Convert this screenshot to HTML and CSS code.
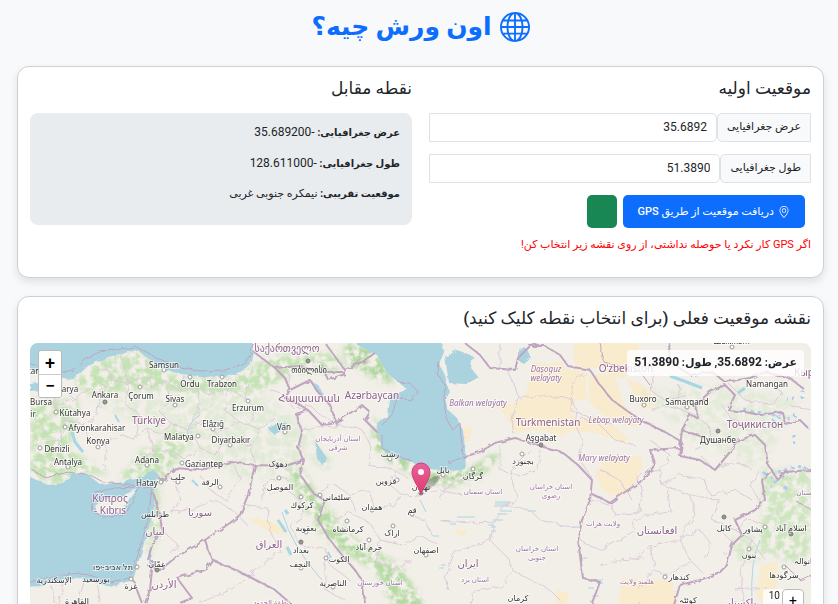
FILE: index.html
```html
<!DOCTYPE html>
<html lang="fa" dir="rtl">
<head>
<meta charset="utf-8">
<meta name="viewport" content="width=device-width, initial-scale=1">
<title>اون ورش چیه؟</title>
<link rel="stylesheet" href="styles.css">
</head>
<body>
<main class="page">
  <h1 class="title">
    <svg class="title-icon" viewBox="0 0 16 16" fill="currentColor" aria-hidden="true"><path d="M0 8a8 8 0 1 1 16 0A8 8 0 0 1 0 8m7.5-6.923c-.67.204-1.335.82-1.887 1.855A8 8 0 0 0 5.145 4H7.5zM4.09 4a9.3 9.3 0 0 1 .64-1.539 7 7 0 0 1 .597-.933A7.03 7.03 0 0 0 2.255 4zm-.582 3.5c.03-.877.138-1.718.312-2.5H1.674a7 7 0 0 0-.656 2.5zM4.847 5a12.5 12.5 0 0 0-.338 2.5H7.5V5zM8.5 5v2.5h2.99a12.5 12.5 0 0 0-.337-2.5zM4.51 8.5a12.5 12.5 0 0 0 .337 2.5H7.5V8.5zm3.99 0V11h2.653c.187-.765.306-1.608.338-2.5zM5.145 12q.208.58.468 1.068c.552 1.035 1.218 1.65 1.887 1.855V12zm.182 2.472a7 7 0 0 1-.597-.933A9.3 9.3 0 0 1 4.09 12H2.255a7 7 0 0 0 3.072 2.472M3.82 11a13.7 13.7 0 0 1-.312-2.5h-2.49c.062.89.291 1.733.656 2.5zm6.853 3.472A7 7 0 0 0 13.745 12H11.91a9.3 9.3 0 0 1-.64 1.539 7 7 0 0 1-.597.933M8.5 12v2.923c.67-.204 1.335-.82 1.887-1.855q.26-.487.468-1.068zm3.68-1h2.146c.365-.767.594-1.61.656-2.5h-2.49a13.7 13.7 0 0 1-.312 2.5m2.802-3.5a7 7 0 0 0-.656-2.5H12.18c.174.782.282 1.623.312 2.5zM11.27 2.461c.247.464.462.98.64 1.539h1.835a7 7 0 0 0-3.072-2.472c.218.284.418.598.597.933M10.855 4a8 8 0 0 0-.468-1.068C9.835 1.897 9.17 1.282 8.5 1.077V4z"/></svg>
    <span>اون ورش چیه؟</span>
  </h1>

  <section class="card columns">
    <div class="column">
      <h2 class="heading">موقعیت اولیه</h2>
      <div class="field">
        <label class="field-label" for="lat">عرض جغرافیایی</label>
        <input class="field-input" id="lat" type="text" value="35.6892">
      </div>
      <div class="field">
        <label class="field-label" for="lng">طول جغرافیایی</label>
        <input class="field-input" id="lng" type="text" value="51.3890">
      </div>
      <div class="actions">
        <button class="btn btn-primary" type="button">
          <svg class="btn-icon" viewBox="0 0 16 16" fill="currentColor" aria-hidden="true"><path d="M12.166 8.94c-.524 1.062-1.234 2.12-1.96 3.07A32 32 0 0 1 8 14.58a32 32 0 0 1-2.206-2.57c-.726-.95-1.436-2.008-1.96-3.07C3.304 7.867 3 6.862 3 6a5 5 0 0 1 10 0c0 .862-.305 1.867-.834 2.94M8 16s6-5.686 6-10A6 6 0 0 0 2 6c0 4.314 6 10 6 10"/><path d="M8 8a2 2 0 1 1 0-4 2 2 0 0 1 0 4m0 1a3 3 0 1 0 0-6 3 3 0 0 0 0 6"/></svg>
          <span>دریافت موقعیت از طریق GPS</span>
        </button>
        <button class="btn btn-success" type="button"></button>
      </div>
      <p class="hint">اگر GPS کار نکرد یا حوصله نداشتی، از روی نقشه زیر انتخاب کن!</p>
    </div>
    <div class="column">
      <h2 class="heading">نقطه مقابل</h2>
      <div class="result">
        <p><strong>عرض جغرافیایی:</strong> <span class="number">-35.689200</span></p>
        <p><strong>طول جغرافیایی:</strong> <span class="number">-128.611000</span></p>
        <p><strong>موقعیت تقریبی:</strong> نیمکره جنوبی غربی</p>
      </div>
    </div>
  </section>

  <section class="card">
    <h2 class="heading">نقشه موقعیت فعلی (برای انتخاب نقطه کلیک کنید)</h2>
    <div class="map">
      <svg class="map-canvas" viewBox="30 343 781 400" preserveAspectRatio="xMidYMin slice">
        <defs>
          <filter id="rough" x="-5%" y="-5%" width="110%" height="110%"><feTurbulence type="fractalNoise" baseFrequency=".12" numOctaves="3" seed="4" result="n"/><feDisplacementMap in="SourceGraphic" in2="n" scale="7"/></filter>
          <filter id="coast" x="-5%" y="-5%" width="110%" height="110%"><feTurbulence type="fractalNoise" baseFrequency=".15" numOctaves="3" seed="9" result="n"/><feDisplacementMap in="SourceGraphic" in2="n" scale="4"/></filter>
          <filter id="mottle" x="-5%" y="-5%" width="110%" height="110%"><feGaussianBlur in="SourceGraphic" stdDeviation="3" result="b"/><feTurbulence type="fractalNoise" baseFrequency=".13" numOctaves="4" seed="2"/><feColorMatrix values="0 0 0 0 0 0 0 0 0 0 0 0 0 0 0 0 0 0 0 0" result="z"/><feTurbulence type="fractalNoise" baseFrequency=".13" numOctaves="4" seed="2"/><feColorMatrix values="0 0 0 0 0 0 0 0 0 0 0 0 0 0 0 0 0 0 4 -1.4" result="m"/><feComposite in="b" in2="m" operator="in"/></filter>
          <linearGradient id="pin" x1="0" y1="0" x2="0" y2="1"><stop offset="0" stop-color="#e8639b"/><stop offset="1" stop-color="#e0396f"/></linearGradient>
        </defs>
        <rect x="0" y="300" width="860" height="500" fill="#f2efe9"/>

        <g fill="#f8ebce" filter="url(#coast)">
          <path d="M530 378L532 364 562 362 566 369 585 372 587 400 574 401 572 416 580 420 590 415 612 424 630 440 620 442 600 434 590 432 575 430 560 436 540 429 515 433 511 424 500 409 485 406 513 404 525 398Z"/>
          <path d="M574 343h28l2 22-16 6-14-8zM588 376l25-3 14 38 15 14-15 2-24-12-13-12zM598 343h40l3 16-20 20-18-10zM612 455l32 2-8 25-14 16-18-6-10-20zM464 427l9-2-4 18-5-2zM622 579l50 2 6 24-4 30h-60zM762 565l16-2-2 26-14 14-6-8zM248 519l16 0 14 6 10 10-16-2zM456 528l12 4-6 5-5-2zM556 590l14 3-4 12-10 0zM626 378l14 6 12 10 0 14-10 0z"/>
        </g>

        <g fill="#c4e2b4" filter="url(#mottle)">
          <path d="M72 382L100 360 140 352 170 374 225 381 252 366 270 356 335 352 345 372 295 372 268 388 230 396 150 390 90 395Z"/>
          <path d="M30 400L80 400 70 450 110 475 74 472 60 486 30 476ZM118 480L142 450 165 440 175 425 190 440 165 480Z"/>
          <path d="M90 400L260 390 320 440 290 475 240 480 190 450Z" opacity=".35"/>
          <path d="M345 343L377 350 395 385 375 378 345 362ZM372 415L388 445 412 462 432 470 468 470 495 453 500 456 480 477 450 487 424 480 395 465 374 448Z" fill="#acd69a"/>
          <path d="M285 465L302 470 318 496 338 520 355 540 400 565 424 603 440 640 410 640 375 570 340 550 318 530 300 500Z" fill="#b4daa2"/>
          <path d="M144 490L160 480 162 530 148 560ZM315 450L332 460 328 470 312 460ZM762 470L811 470 811 555 790 565 762 540Z" opacity=".8"/>
          <path d="M640 390L730 385 800 400 760 470 690 440Z" opacity=".3"/>
          <path d="M728 540L770 530 790 555 740 562Z" opacity=".6"/>
        </g>

        <g fill="#aad3df" filter="url(#coast)">
          <path d="M20 330L20 366 50 378 74 379 88 366 108 357 137 350 148 358 163 370 183 374 207 378 230 376 242 371 252 362 254 352 248 330Z"/>
          <path d="M353 330L357 345 377 355 386 372 398 382 408 390 390 395 388 405 387 416 377 423 379 438 383 450 392 457 412 462 430 468 446 472 466 469 465 448 463 430 456 417 448 410 445 398 449 391 445 376 439 364 444 352 440 330Z"/>
          <path d="M445 357L457 350 473 356 471 368 479 378 465 384 449 383ZM518 349L526 347 531 358 524 364 518 360Z"/>
          <path d="M20 475L30 477 48 485 63 483 73 473 87 474 101 485 123 482 143 477 152 469 159 475 153 490 155 508 148 530 140 557 133 580 110 587 80 578 63 580 43 586 20 587Z"/>
          <path d="M30 384l9-1 1 7-10 1zM268 429l11-7 8 1-4 6-8 6zM313 382l6 4 4 8-5-1zM315 440l5 8 7 10-5 7-5-7z"/>
        </g>
        <path d="M95 506L104 499 121 496 138 489 127 502 123 512 110 515 98 513Z" fill="#f2efe9" filter="url(#coast)"/>

        <g fill="none" stroke="#a9d6e4" stroke-width="1">
          <path d="M495 502h15M495 504h14M494 506h14M457 517h18M500 511h12M488 525h6M491 531h5M491 527h5M528 511h8M450 524h6M433 536h6M442 521h8M573 527h6M583 558h4M588 588h6M595 580h8M597 583h6M592 596h7M446 565h-5M444 568h-5M497 514h10M493 520h10"/>
          <path d="M278 520l8 12M287 547l4 8M285 510l3 4M72 432l3 10 8 10" stroke-width="3"/>
          <path d="M192 480l6 6M150 550v14M328 552l3 6M115 415l4 7" stroke-width="2"/>
          <path d="M670 376l14 5 18 7M738 393l7-5" stroke-width="3"/>
          <path d="M282 512q10 35 40 68M420 500l6 12M200 415q-15 10-12 22M760 540q-10 20-8 63"/>
        </g>
        <g fill="none" stroke="#a8cef4" stroke-width="3" stroke-dasharray="3 4" filter="url(#rough)">
          <path d="M744 410l18 3 18 3M768 428l10-12M786 418l12-3M764 473l12 8-6 6M778 472l20-6 10 4M785 398l12 1M785 486v4M802 389v10M795 436v8"/>
        </g>

        <g class="province" filter="url(#rough)">
          <path d="M60 385L75 400 90 388 100 395 112 380 128 384 140 378 152 388 165 380 180 392 196 386 210 396 228 388 245 398 250 385"/>
          <path d="M100 395L98 415 84 425 90 440 106 445 120 434 136 440 148 428 160 434 172 424 190 430 205 420 220 430 240 422 260 430 275 418"/>
          <path d="M128 384L126 405 140 415 136 440M165 380L170 400 160 412 172 424M196 386L200 404 190 430M228 388L225 410 240 422M60 385L54 405 66 420 60 440 40 440M84 425L66 420M106 445L104 470M75 400L54 405M60 440L62 462 45 470M148 428L152 450 140 465M190 430L200 448 185 460 175 452 152 450M205 420L222 440 215 455 200 448M222 440L250 445 260 430M245 398L255 408 250 420M250 445L255 465"/>
          <path d="M98 372L110 368 112 380M120 352L128 384M145 360L152 388M183 374L180 392M213 378L210 396"/>
          <path d="M160 472L175 480 180 500 170 512 190 510 215 500 235 512 248 526M200 475L210 490 225 500 240 478 235 465M162 530L178 545 170 555"/>
          <path d="M268 388L285 395 295 410 310 405 320 415 335 422M275 365L290 375 288 388M300 430L318 428 340 425 362 430 372 448 368 465 395 470 410 480"/>
          <path d="M320 490L335 485 350 495 368 490 375 510 395 505 402 495 420 496 440 490 462 495M335 520L350 512 372 525 380 540 402 545 420 535 438 545M395 470L390 485 402 495M350 495L355 512M410 515L425 520 432 535M380 540L375 560 395 570 412 560"/>
          <path d="M270 495L285 488 300 500 305 515 290 525 300 545 325 548 330 565 350 580M240 505L268 508 270 530 280 550 262 565 245 580 230 590 200 603M325 560L325 590 345 600M262 500L268 480 290 478"/>
          <path d="M440 520L470 523 495 522 505 505 518 500 510 470 530 450M505 505L530 510 540 520 575 528M495 522L490 540 510 560 512 570 550 590 560 600M490 540L455 552 445 575 448 590M512 570L505 585 475 590 470 603M440 500L445 488 460 480 480 478M440 480L470 474"/>
          <path d="M507 370L515 385 518 398 540 396 570 398 577 410M571 385L570 410 585 415M518 398L512 420 515 435M577 410L575 425 582 440 580 460 592 478M585 415L600 425 615 440 635 445M500 343V370M587 372L571 385M612 424L580 418M540 450L538 470 520 476 500 470 500 445"/>
          <path d="M590 500L612 505 615 515 640 512M580 540L600 550 620 540 635 530 632 522 650 515 670 510M600 565L620 560 640 558 650 545 680 540 700 530M640 512L642 490 635 475 660 470 662 485 690 495 720 500M662 485L680 475 705 480 710 495 735 490 752 500M690 495L695 515 680 540 690 560 705 575M720 500L712 520 735 530 750 520 765 525M650 545L655 565 640 590M670 510L668 490M700 530L712 545 705 560M690 560L670 575 650 570"/>
          <path d="M650 412L662 405 690 412 708 425 712 440 695 450M700 455L715 470 735 462 750 468M655 370L650 390 665 400 690 395M680 385L678 400M730 385L745 400 775 405 782 392 770 385M745 425L730 418 722 405M790 405L811 410M735 530L752 540 765 560M752 540L740 570 745 603M660 470L670 455 650 440"/>
          <path d="M640 603L650 620M735 590L770 588M98 585L100 603M85 578L78 603M65 580L58 603M52 585L55 603M600 470L620 480 632 500M720 530L735 545 725 555M760 470L750 485 762 505"/>
        </g>

        <g class="border" filter="url(#coast)">
          <path d="M20 360L50 370 72 372 85 358 100 352 135 347 143 350 155 357 175 366 200 371 225 370 240 365 250 358 253 343" stroke-width="1"/>
          <path d="M254 352L275 368 285 378 290 390 285 398 300 405 308 410 322 425 333 422 340 420 362 405 370 412M308 410L296 414 302 432 298 448 304 460 285 466 255 465 230 462 200 470 175 468 165 480 158 478"/>
          <path d="M275 368L300 366 320 372 345 372M290 390L310 380 318 392 330 405 337 425M325 343L345 370 362 362 375 353M322 365L328 380 345 374M370 412L365 420 378 433"/>
          <path d="M304 460L300 475 315 495 325 500 318 520 330 540 342 555 355 570 362 580 365 603M255 465L248 495 240 515 230 523 205 540 175 558 160 570 148 566"/>
          <path d="M205 540L212 560 205 570 177 578 192 598 180 603M212 560L240 572 275 590 290 603M153 560L150 590 145 603M133 580L142 603M162 530L152 545 148 560M153 492L160 515 162 530"/>
          <path d="M463 457L480 452 495 443 515 438 540 446 562 452 578 465 592 480 590 500 582 520 578 540 583 578 600 582 592 603M592 494L610 503 625 492 640 482 655 465 650 450 680 448 682 430 712 440"/>
          <path d="M465 343L480 355 490 368 515 370 518 358 530 346 545 346 560 355 568 366 590 370 600 385 612 400 640 420 665 432 682 442 680 456 700 460 715 470 740 440 755 435 765 445 768 465 778 480 785 472 811 470"/>
          <path d="M674 605L680 585 700 580 720 572 727 565 732 545 742 535 735 520 755 510 765 500 762 480 772 470M540 346L532 343M682 430L690 415 698 418 695 405 710 392 725 385 735 395 728 410 745 412 760 415 782 412 785 424 800 420 808 428M670 343L668 360 690 375 712 372 725 382 750 378 765 372 790 378 805 390"/>
          <path d="M398 382L410 383 418 392 412 400 397 398 392 415 382 425M382 434L382 448 395 455 412 461M439 362L438 375 445 385 444 400 446 418 453 430 460 423 463 457 448 463" stroke-width="1"/>
          <path d="M30 468L45 478 68 472 92 476 103 482 130 485 152 488M152 488L148 520 138 555 130 578 110 582 80 573 50 577 30 582M92 505L95 492 115 488 140 487 132 502 125 515 105 518 93 512Z" stroke-width="1"/>
          <path d="M785 565L800 580 811 575M795 500L811 510M600 343L604 362 640 372 650 385" stroke-width="1"/>
        </g>

        <g class="dots">
          <circle cx="164" cy="370" r="2"/><circle cx="190" cy="377" r="2"/><circle cx="222" cy="377" r="2"/><circle cx="140" cy="387" r="2"/><circle cx="175" cy="405" r="2"/><circle cx="248" cy="401" r="2"/><circle cx="56" cy="412" r="2"/><circle cx="65" cy="427" r="2"/><circle cx="98" cy="447" r="2"/><circle cx="213" cy="429" r="2"/><circle cx="198" cy="436" r="2"/><circle cx="40" cy="448" r="2"/><circle cx="68" cy="467" r="2"/><circle cx="147" cy="465" r="2"/><circle cx="182" cy="463" r="2"/><circle cx="161" cy="482" r="2"/><circle cx="178" cy="482" r="2"/><circle cx="230" cy="445" r="2"/><circle cx="285" cy="432" r="2"/><circle cx="390" cy="459" r="2"/><circle cx="397" cy="480" r="2"/><circle cx="443" cy="475" r="2"/><circle cx="473" cy="469" r="2"/><circle cx="522" cy="454" r="2"/><circle cx="644" cy="405" r="2"/><circle cx="687" cy="407" r="2"/><circle cx="279" cy="478" r="2"/><circle cx="301" cy="497" r="2"/><circle cx="320" cy="495" r="2"/><circle cx="347" cy="521" r="2"/><circle cx="372" cy="510" r="2"/><circle cx="412" cy="514" r="2"/><circle cx="393" cy="526" r="2"/><circle cx="369" cy="540" r="2"/><circle cx="426" cy="555" r="2"/><circle cx="326" cy="558" r="2"/><circle cx="301" cy="568" r="2"/><circle cx="333" cy="587" r="2"/><circle cx="137" cy="567" r="2"/><circle cx="131" cy="579" r="2"/><circle cx="665" cy="577" r="2"/><circle cx="765" cy="527" r="2"/><circle cx="749" cy="549" r="2"/><circle cx="784" cy="567" r="2"/><circle cx="732" cy="347" r="2"/><circle cx="220" cy="487" r="2"/><circle cx="306" cy="532" r="2"/>
          <g class="capital"><circle cx="105" cy="402" r="2"/><circle cx="308" cy="361" r="2"/><circle cx="541" cy="445" r="2"/><circle cx="718" cy="431" r="2"/><circle cx="301" cy="542" r="2"/><circle cx="157" cy="570" r="2"/><circle cx="724" cy="517" r="2"/><circle cx="791" cy="534" r="2"/><circle cx="421" cy="493" r="2"/></g>
        </g>

        <g class="city">
          <text x="34" y="374">tan</text><text x="164" y="368">Samsun</text><text x="190" y="387">Ordu</text><text x="222" y="387">Trabzon</text><text x="70" y="392">arya</text><text x="105" y="398">Ankara</text><text x="141" y="399">Çorum</text><text x="175" y="402">Sivas</text><text x="41" y="405">Bursa</text><text x="33" y="417">ir</text><text x="75" y="416">Kütahya</text><text x="248" y="411">Erzurum</text><text x="97" y="431">Afyonkarahisar</text><text x="213" y="427">Elâzığ</text><text x="98" y="444">Konya</text><text x="179" y="440">Malatya</text><text x="231" y="443">Diyarbakır</text><text x="284" y="430">Van</text><text x="57" y="452">Denizli</text><text x="68" y="465">Antalya</text><text x="147" y="463">Adana</text><text x="204" y="467">Gaziantep</text><text x="147" y="486">Hatay</text><text x="541" y="441">Aşgabat</text><text x="643" y="402">Buxoro</text><text x="687" y="405">Samarqand</text><text x="767" y="387">Namangan</text><text x="718" y="443">Душанбе</text><text x="732" y="344">Шымкент</text>
          <text x="309" y="373">თბილისი</text><text x="278" y="467">دهۆک</text><text x="390" y="457">رشت</text><text x="443" y="473">بابل</text><text x="473" y="479">گرگان</text><text x="523" y="464">بجنورد</text><text x="178" y="480">حلب</text><text x="210" y="485">الرقة</text><text x="280" y="490">الموصل</text><text x="386" y="484">قزوين</text><text x="421" y="490">تهران</text><text x="336" y="500">سلێمانی</text><text x="302" y="508">كركوك</text><text x="372" y="510">همدان</text><text x="412" y="513">قم</text><text x="155" y="517">طرابلس</text><text x="306" y="531">بعقوبة</text><text x="348" y="532">کرمانشاه</text><text x="392" y="536">اراک</text><text x="369" y="550">خرم آباد</text><text x="426" y="553">اصفهان</text><text x="301" y="553">بغداد</text><text x="339" y="562">الكوت</text><text x="300" y="567">النجف</text><text x="333" y="586">الناصرية</text><text x="113" y="570">תל אביב-יפו</text><text x="157" y="567">عمّان</text><text x="54" y="583">الإسكندرية</text><text x="96" y="582">بورسعيد</text><text x="131" y="589">غزة</text><text x="77" y="604">القاهرة</text><text x="518" y="601">کرمان</text><text x="724" y="531">کابل</text><text x="753" y="532">پشاور</text><text x="791" y="531">اسلام آباد</text><text x="749" y="558">بنوں</text><text x="784" y="578">سرگودھا</text><text x="803" y="564">انوالہ</text><text x="679" y="580">کندهار</text><text x="688" y="603">کوئٹہ</text>
        </g>
        <g class="country">
          <text x="149" y="424">Türkiye</text><text x="372" y="399">Azərbaycan</text><text x="548" y="426">Türkmenistan</text><text x="626" y="372">Oʻzbekiston</text><text x="755" y="428">Тоҷикистон</text><text x="804" y="376">Кыр</text><text x="287" y="352">საქართველო</text><text x="309" y="402">Հայաստան</text><text x="110" y="502">Κύπρος</text><text x="110" y="514">- Kıbrıs</text><text x="200" y="516">سوريا</text><text x="155" y="535">لبنان</text><text x="269" y="548">العراق</text><text x="164" y="588">الأردن</text><text x="468" y="567">ایران</text><text x="657" y="534">افغانستان</text><text x="740" y="606">پاکستان</text>
        </g>
        <g class="region">
          <text x="338" y="441">استان آذربایجان</text><text x="338" y="450">شرقی</text><text x="483" y="494">استان سمنان</text><text x="551" y="489">استان خراسان</text><text x="551" y="498">رضوی</text><text x="537" y="551">استان خراسان</text><text x="537" y="560">جنوبی</text><text x="475" y="582">استان یزد</text><text x="380" y="585">استان خوزستان</text><text x="603" y="526">ولایت هرات</text><text x="637" y="584">هلمند ولایت</text><text x="273" y="605">منطقة الحدود</text><text x="804" y="495">ستان</text>
        </g>
        <g class="region region-latin">
          <text x="546" y="372">Daşoguz</text><text x="546" y="381">welaýaty</text><text x="478" y="406">Balkan welaýaty</text><text x="616" y="423">Lebap welaýaty</text><text x="604" y="461">Mary welaýaty</text>
        </g>

        <ellipse cx="431" cy="483" rx="11" ry="4" fill="#333" opacity=".3" transform="rotate(-38 431 483)" filter="url(#coast)"/>
        <path d="M421 494C417 484 412 479 412 472A9 9 0 0 1 430 472C430 479 425 484 421 494Z" fill="url(#pin)" stroke="#cf3f73" stroke-width="1"/>
        <circle cx="421" cy="472" r="3" fill="#fff"/>
      </svg>
      <div class="zoom-control" dir="ltr">
        <button type="button" aria-label="بزرگ‌نمایی">+</button>
        <button type="button" aria-label="کوچک‌نمایی">−</button>
      </div>
      <div class="coords">عرض: <span class="number">35.6892</span>, طول: <span class="number">51.3890</span></div>
      <div class="scale-control" dir="ltr"><span>10</span><button type="button">+</button></div>
    </div>
  </section>
</main>
</body>
</html>
```
FILE: styles.css
```css
* { box-sizing: border-box; }

body {
  margin: 0;
  background: #f8f9fa;
  color: #212529;
  font-family: Roboto, "DejaVu Sans", sans-serif;
  font-size: 11px;
  line-height: 18px;
}

button, input { font: inherit; }
h1, h2, p { margin: 0; }

.page {
  display: flex;
  flex-direction: column;
  gap: 18px;
  padding: 6px 14px 18px 17px;
}

.title {
  display: flex;
  align-items: center;
  justify-content: center;
  gap: 8px;
  height: 42px;
  color: #0d6efd;
  font-size: 25px;
  line-height: 42px;
  font-weight: 700;
}
.title-icon { width: 30px; height: 30px; }

.card {
  padding: 12px;
  background: #fff;
  border: 1px solid #cfd0d1;
  border-radius: 12px;
  box-shadow: 0 4px 8px rgba(0, 0, 0, .1);
}

.columns {
  display: grid;
  grid-template-columns: 1fr 1fr;
  gap: 17px;
  padding-bottom: 23px;
}

.heading {
  height: 34px;
  font-size: 17px;
  line-height: 18px;
  font-weight: 500;
}

.number { font-size: 12px; }

.field {
  display: flex;
  height: 29px;
  margin-bottom: 12px;
}
.field-label {
  padding: 4px 9px;
  background: #f8f9fa;
  border: 1px solid #dee2e6;
  border-radius: 5px 0 0 5px;
}
.field-input {
  flex: 1;
  min-width: 0;
  padding: 2px 9px 4px;
  color: inherit;
  background: #fff;
  border: 1px solid #dee2e6;
  border-radius: 0 5px 5px 0;
  font-size: 12px;
}

.actions {
  display: flex;
  gap: 6px;
  padding-right: 6px;
}
.btn {
  display: flex;
  align-items: center;
  gap: 4px;
  height: 33px;
  padding: 0 15px;
  color: #fff;
  border: 0;
  border-radius: 5px;
  font-weight: 500;
}
.btn-primary { background: #0d6efd; }
.btn-success { background: #198754; }
.btn-icon { width: 12px; height: 12px; }

.hint {
  margin-top: 8px;
  color: #f00;
}

.result {
  height: 112px;
  padding: 10px 12px;
  background: #e9ecef;
  border-radius: 8px;
}
.result p { margin-bottom: 12px; }
.result strong { font-size: 10px; }

.map {
  position: relative;
  height: 400px;
  overflow: hidden;
  border-radius: 8px;
}
.map-canvas {
  display: block;
  width: 100%;
  height: 100%;
  direction: ltr;
  font-family: "Noto Sans", "DejaVu Sans", sans-serif;
}
.map-canvas text {
  text-anchor: middle;
  paint-order: stroke;
  stroke: rgba(255, 255, 255, .6);
  stroke-width: 2px;
}
.city { font-size: 8px; fill: #333; }
.country { font-size: 10px; fill: #8d618b; }
.region { font-size: 7px; fill: #9a72a0; }
.region-latin { font-size: 8px; font-style: italic; }
.province { fill: none; stroke: #dccbd9; stroke-width: 1; }
.border { fill: none; stroke: #bfa5bf; stroke-width: 2; stroke-linejoin: round; }
.dots { fill: #fff; stroke: #999; stroke-width: 1; }
.capital { fill: #999; stroke: #777; }

.zoom-control {
  position: absolute;
  top: 7px;
  left: 8px;
  width: 24px;
  border: 1px solid #bbb;
  border-radius: 3px;
  overflow: hidden;
}
.zoom-control button {
  display: block;
  width: 100%;
  height: 23px;
  padding: 0;
  color: #000;
  background: #fff;
  border: 0;
  font-size: 18px;
  line-height: 22px;
  font-weight: 500;
}
.zoom-control button + button { border-top: 1px solid #ccc; }

.coords {
  position: absolute;
  top: 7px;
  right: 7px;
  padding: 3px 7px 4px;
  background: rgba(255, 255, 255, .8);
  border-radius: 4px;
  font-weight: 700;
}

.scale-control {
  position: absolute;
  top: 246px;
  right: 7px;
  display: flex;
  gap: 2px;
  padding-left: 6px;
  background: rgba(255, 255, 255, .8);
  border-radius: 4px;
  font-size: 10px;
  line-height: 14px;
}
.scale-control button {
  width: 22px;
  height: 24px;
  padding: 0;
  color: #000;
  background: #fff;
  border: 1px solid #bbb;
  border-radius: 4px;
  font-size: 14px;
}
```
